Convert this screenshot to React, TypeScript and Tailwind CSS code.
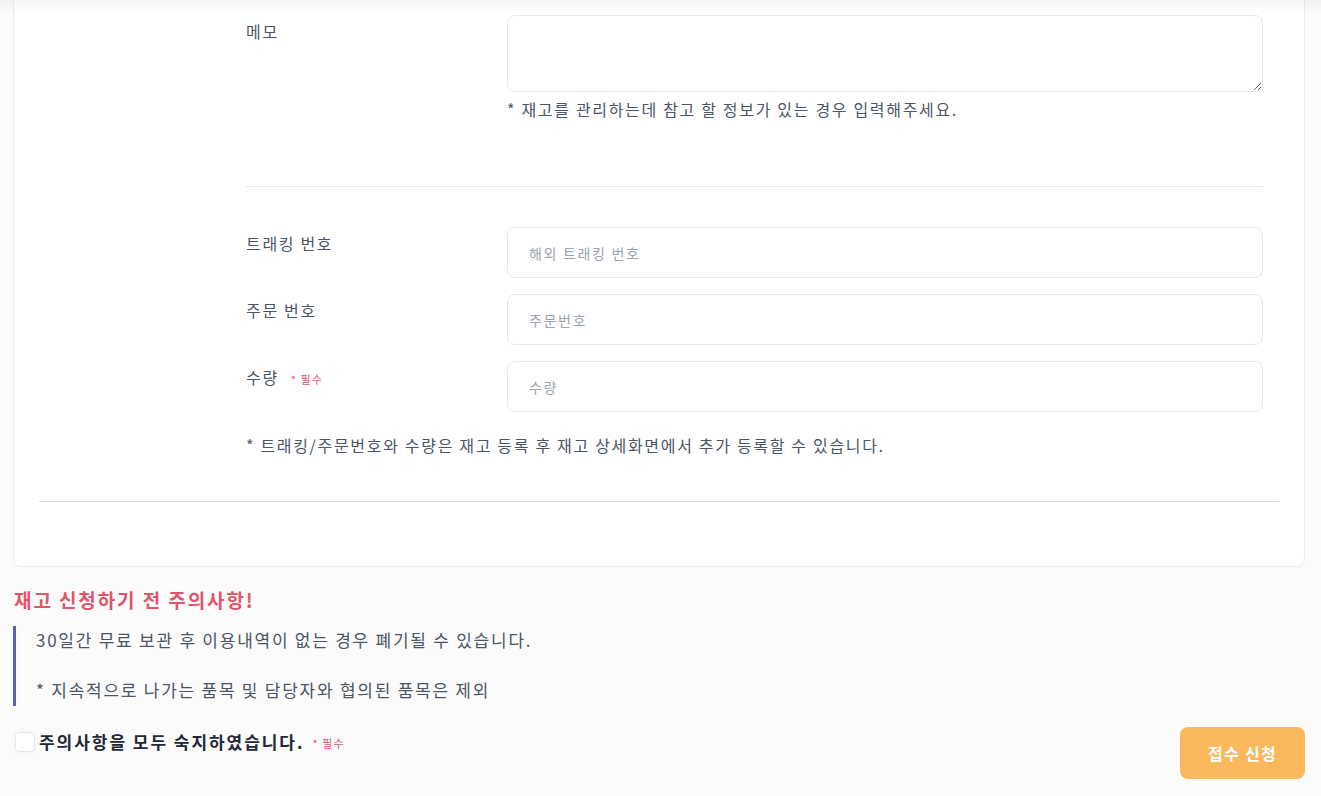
import React from 'react';

// 입력 필드 한 줄
const FieldRow = ({
  label,
  placeholder,
  required = false,
}: {
  label: string;
  placeholder: string;
  required?: boolean;
}) => (
  <div className="flex">
    <div className="w-[261px] shrink-0 pt-[4px] text-[16px] leading-[24px] tracking-[0.105em] text-[#4b5563]">
      <span>{label}</span>
      {required && <span className="ml-[12px] text-[11px] tracking-[0.1em] text-[#e0556a]">* 필수</span>}
    </div>
    <input
      placeholder={placeholder}
      className="flex-1 h-[51px] rounded-lg border border-[#e7e8f0] bg-white px-[21px] text-[14px] tracking-[0.12em] text-[#374151] placeholder:text-[#9ca3af] outline-none"
    />
  </div>
);

export default function App() {
  return (
    <div className="min-h-[796px] bg-[#fbfbfb] font-['Noto_Sans_CJK_KR','Noto_Sans',sans-serif] relative">
      <div className="pointer-events-none absolute inset-x-0 top-0 h-[14px] bg-gradient-to-b from-[rgba(0,0,0,0.035)] to-transparent" />

      <div className="px-[13px] pr-[16px]">
        {/* 카드 */}
        <div className="bg-white border-x border-b border-[#ececec] rounded-b-lg pt-[15px] pb-[64px] px-[25px]">
          <div className="pl-[207px] pr-[16px]">
            {/* 메모 */}
            <div className="flex">
              <div className="w-[261px] shrink-0 pt-[4px] text-[16px] leading-[24px] tracking-[0.105em] text-[#4b5563]">메모</div>
              <div className="flex-1">
                <textarea className="block w-full h-[77px] rounded-lg border border-[#e7e8f0] bg-white px-[21px] py-3 outline-none" />
                <p className="mt-[5px] text-[16px] leading-[24px] tracking-[0.105em] text-[#4b5563]">
                  * 재고를 관리하는데 참고 할 정보가 있는 경우 입력해주세요.
                </p>
              </div>
            </div>

            <div className="mt-[65px] border-t border-[#e8e8e8]" />

            <div className="mt-[40px] flex flex-col gap-[16px]">
              <FieldRow label="트래킹 번호" placeholder="해외 트래킹 번호" />
              <FieldRow label="주문 번호" placeholder="주문번호" />
              <FieldRow label="수량" placeholder="수량" required />
            </div>

            <p className="mt-[21px] text-[16px] leading-[24px] tracking-[0.105em] text-[#4b5563]">
              * 트래킹/주문번호와 수량은 재고 등록 후 재고 상세화면에서 추가 등록할 수 있습니다.
            </p>
          </div>

          <div className="mt-[44px] border-t border-[#d9d9d9]" />
        </div>

        {/* 주의사항 */}
        <h3 className="mt-[20px] text-[19px] leading-[26px] font-bold tracking-[0.1em] text-[#e0556a] px-[1px]">
          재고 신청하기 전 주의사항!
        </h3>
        <div className="mt-[13px] border-l-[3px] border-[#5e5cc2] pl-[20px] text-[17px] leading-[25px] tracking-[0.103em] text-[#4b5563]">
          <p className="pt-[1px]">30일간 무료 보관 후 이용내역이 없는 경우 폐기될 수 있습니다.</p>
          <p className="mt-[25px] pb-[4px]">* 지속적으로 나가는 품목 및 담당자와 협의된 품목은 제외</p>
        </div>

        <div className="mt-[21px] flex justify-between items-start">
          <label className="mt-[4px] flex items-center">
            <span className="ml-[2px] w-[20px] h-[20px] rounded-[4px] border border-[#e3e6ee] bg-white shadow-[0_0_6px_rgba(0,0,0,0.04)]" />
            <span className="ml-[4px] text-[17px] leading-[22px] font-bold tracking-[0.115em] text-[#1f2937]">주의사항을 모두 숙지하였습니다.</span>
            <span className="ml-[8px] mt-[2px] text-[11px] tracking-[0.1em] text-[#e0556a]">* 필수</span>
          </label>
          <button className="w-[125px] h-[52px] rounded-lg bg-[#f9b85c] text-white text-[16px] font-bold tracking-[0.08em]">
            접수 신청
          </button>
        </div>
      </div>
    </div>
  );
}
